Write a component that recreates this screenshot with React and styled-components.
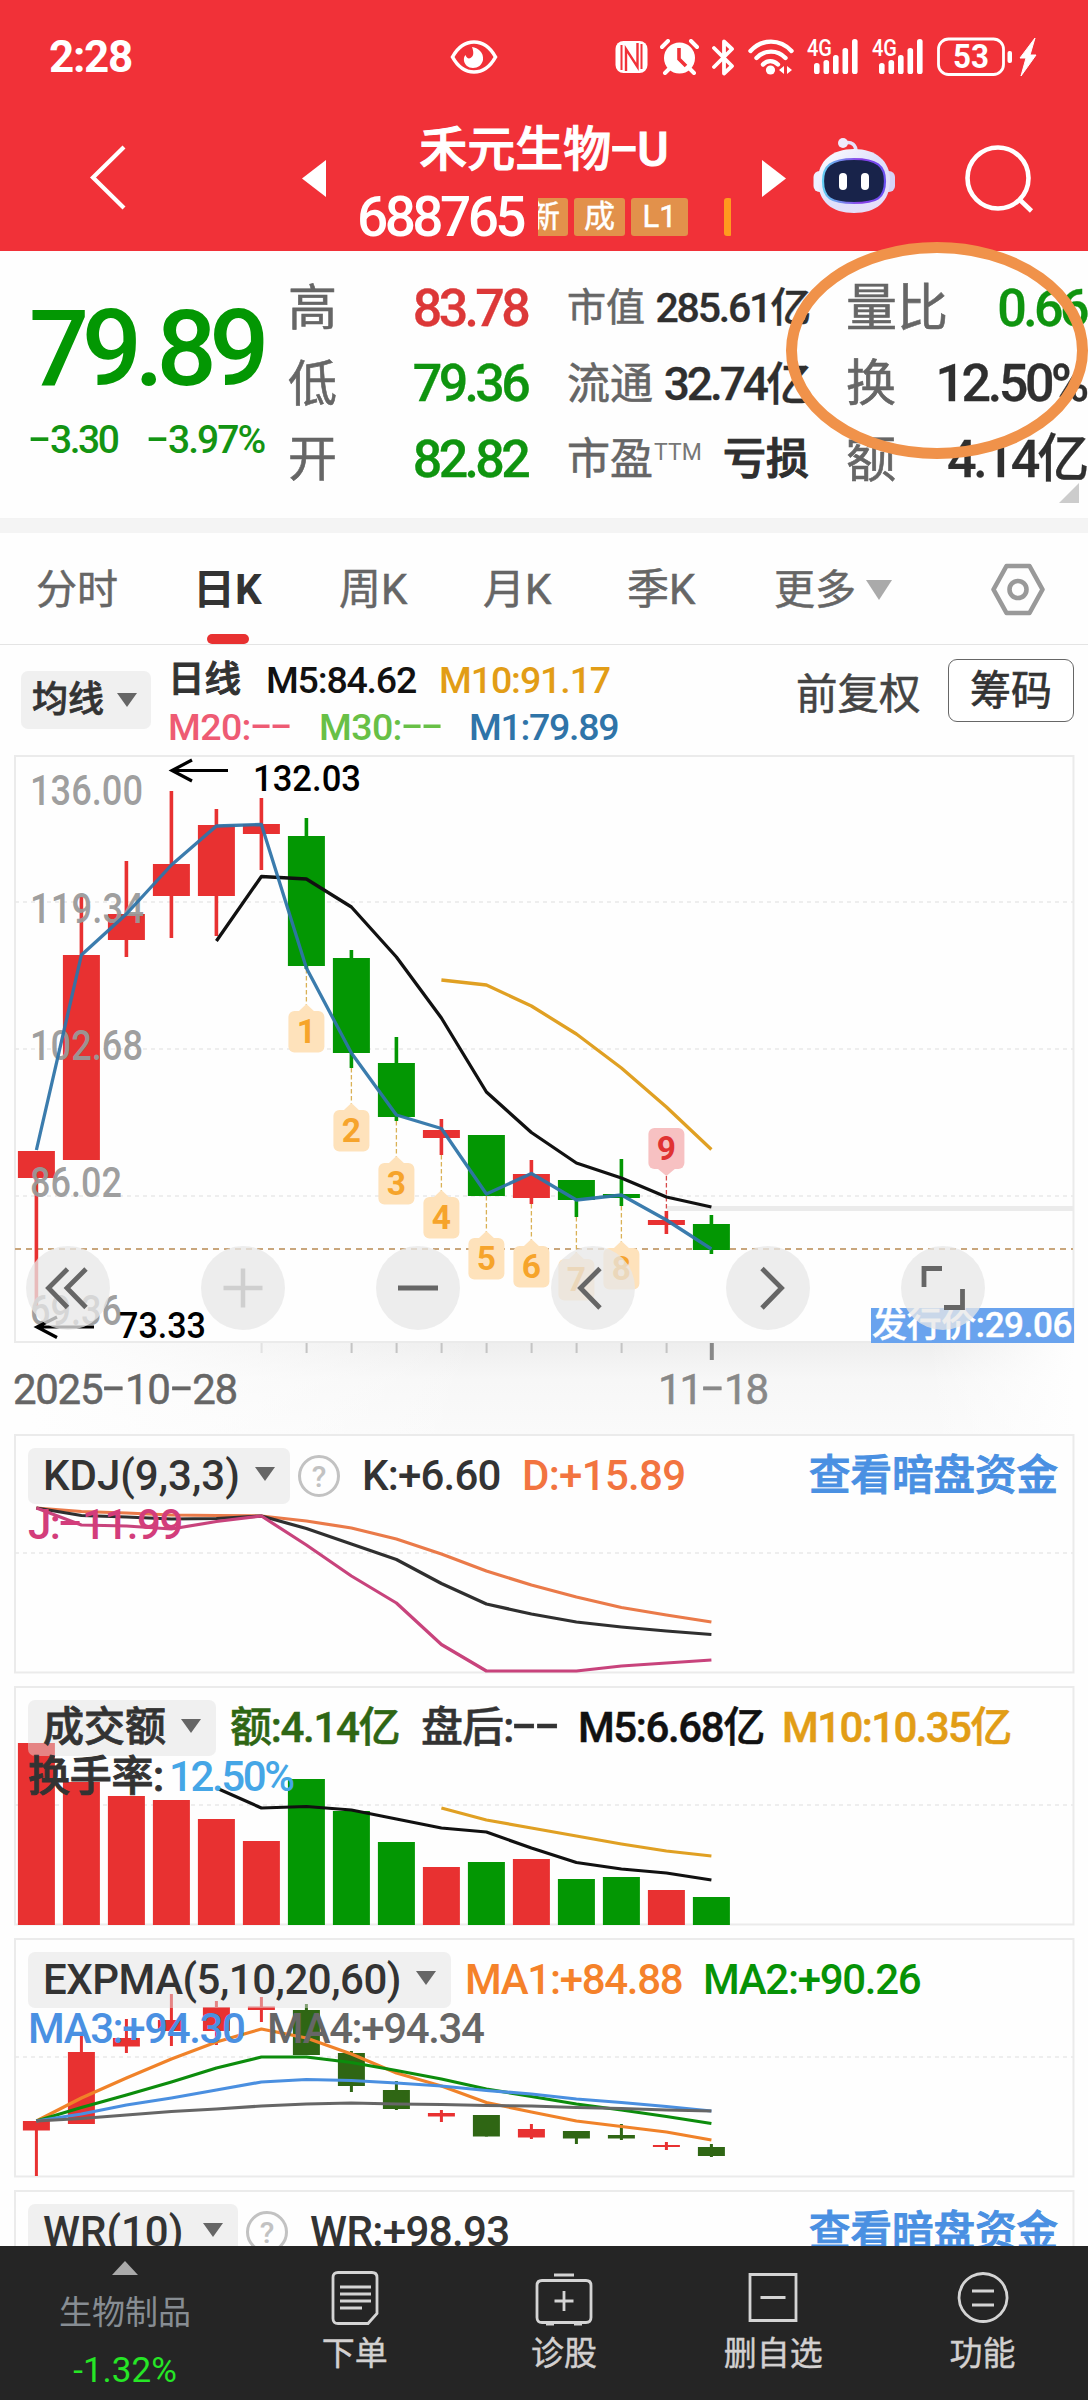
import React from 'react';
import styled, { createGlobalStyle } from 'styled-components';

const FONT = 'Roboto, "Noto Sans CJK SC", "Liberation Sans", sans-serif';
const RED = '#e83131';
const GREEN = '#039703';

const Global = createGlobalStyle`
  * { box-sizing: border-box; }
  body { margin: 0; background: #fff; font-family: ${FONT}; }
  svg { display: block; flex: none; }
  button { font-family: inherit; border: 0; padding: 0; background: none; }
`;

const Screen = styled.div`
  position: relative;
  width: 1088px;
  height: 2400px;
  overflow: hidden;
  display: flex;
  flex-direction: column;
  background: #fefefe;
`;
const Label = styled.span`
  display: block;
  flex: none;
  white-space: nowrap;
  width: ${(p) => (p.$w ? `${p.$w}px` : 'auto')};
  font-size: ${(p) => p.$size}px;
  font-weight: ${(p) => p.$weight || 500};
  letter-spacing: ${(p) => p.$ls || 0}px;
  color: ${(p) => p.$color || '#333'};
  line-height: ${(p) => p.$lh || p.$size}px;
  -webkit-text-stroke: ${(p) => p.$stroke || 0}px currentColor;
`;
const Dash = styled.span`
  display: inline-block;
  width: 0.54em;
  text-align: center;
  letter-spacing: 0;
  transform: translateY(-0.06em) scaleX(1.75);
`;

function T({ children, size, weight, ls, color, w, lh, stroke }) {
  const parts = String(children).split('-');
  return (
    <Label $size={size} $weight={weight} $ls={ls} $color={color} $w={w} $lh={lh} $stroke={stroke}>
      {parts.map((part, i) => (
        <React.Fragment key={i}>
          {i > 0 && <Dash>-</Dash>}
          {part}
        </React.Fragment>
      ))}
    </Label>
  );
}

/* ---------- header ---------- */
const Header = styled.header`
  flex: none;
  height: 251px;
  background: #f13138;
  color: #fff;
`;
const StatusBar = styled.div`
  height: 114px;
  padding: 0 50px 0 49px;
  display: flex;
  align-items: center;
`;
const StatusIcons = styled.div`
  margin-left: auto;
  display: flex;
  align-items: center;
`;
const StatusSlot = styled.div`
  margin-left: ${(p) => p.$gap || 0}px;
`;
const Eye = styled.div`
  margin-left: 311px;
`;
const TitleBar = styled.div`
  height: 137px;
  display: flex;
  align-items: flex-start;
`;
const IconSlot = styled.div`
  margin: ${(p) => p.$m};
`;
const TitleBlock = styled.div`
  width: 436px;
  display: flex;
  flex-direction: column;
  align-items: center;
`;
const CodeRow = styled.div`
  width: 436px;
  margin-top: 11px;
  padding-left: 31px;
  display: flex;
  align-items: center;
  height: 40px;
`;
const Badges = styled.div`
  flex: none;
  width: 193px;
  margin-left: 13px;
  height: 38px;
  overflow: hidden;
  display: flex;
  gap: 6px;
`;
const Badge = styled.span`
  flex: none;
  width: ${(p) => p.$w}px;
  margin-left: ${(p) => p.$ml || 0}px;
  height: 38px;
  line-height: 38px;
  border-radius: 3px;
  background: ${(p) => p.$bg || '#e2914b'};
  text-align: center;
  font-size: 31px;
  -webkit-text-stroke: 0.500px #fff;
  white-space: nowrap;
`;
const SignalIcon = styled.svg`
  overflow: visible;
`;

const Signal = () => (
  <SignalIcon width="52" height="38" viewBox="0 0 52 38">
    <text x="0" y="18" fill="#fff" fontSize="23" fontWeight="500" textLength="25" lengthAdjust="spacingAndGlyphs">4G</text>
    {[[7, 25], [16.500, 22], [26, 17], [35.500, 10], [45, 1]].map(([x, y]) => (
      <rect key={x} x={x} y={y} width="5.600" height={36 - y} rx="2.600" fill="#fff" />
    ))}
  </SignalIcon>
);

function StatusRow() {
  return (
    <StatusBar>
      <T size={44} weight={700} ls={-1.300} color="#fff" w={90}>2:28</T>
      <Eye>
        <svg width="48" height="36" viewBox="0 0 48 36" fill="none" stroke="#fff">
          <path d="M2.500 18C8 8 15 3 24 3s16 5 21.500 15C40 28 33 33 24 33S8 28 2.500 18z" strokeWidth="3.600" />
          <path d="M22 8c6 1 12 5 11 13-1 5-5 8-10 8-5 0-8-3-9-7-.5-3 .5-5 1.500-6 1 3 3 4 5 3 4-2 3-7 1.500-11z" fill="#fff" stroke="none" />
        </svg>
      </Eye>
      <StatusIcons>
        <svg width="33" height="34" viewBox="0 0 33 34">
          <rect x="0.500" y="1" width="32" height="32" rx="8" fill="#fff" />
          <path d="M6.500 5v25M26.500 4v25" stroke="#f13138" strokeWidth="2" />
          <path d="M11 31V9l11.500 18V3" fill="none" stroke="#f13138" strokeWidth="2.400" />
        </svg>
        <StatusSlot $gap={12}>
          <svg width="39" height="36" viewBox="0 0 39 36">
            <circle cx="19.500" cy="19" r="15.500" fill="#fff" />
            <path d="M2 8l6-6M37 8l-6-6M5 34l5-5M34 34l-5-5" stroke="#fff" strokeWidth="4" strokeLinecap="round" />
            <path d="M19 9v11l7 7" fill="none" stroke="#f13138" strokeWidth="3.600" />
          </svg>
        </StatusSlot>
        <StatusSlot $gap={13}>
          <svg width="23" height="37" viewBox="0 0 23 37" fill="none" stroke="#fff" strokeWidth="3.800" strokeLinejoin="round" strokeLinecap="round">
            <path d="M2 9l18 18-8 7.500V2.500L20 10 2 28" />
          </svg>
        </StatusSlot>
        <StatusSlot $gap={13}>
          <svg width="46" height="36" viewBox="0 0 46 36" fill="none" stroke="#fff" strokeWidth="4.400" strokeLinecap="round">
            <path d="M2.500 12C14-.5 32-.5 43.500 12M8.500 19c8-8.500 21-8.500 29 0M15 25.500c4-4.500 10.500-4.500 15 0" />
            <circle cx="22.500" cy="31" r="4.600" fill="#fff" stroke="none" />
            <path d="M36 27v8l-5-4zM39 27v8l5-4z" fill="#fff" stroke="none" />
          </svg>
        </StatusSlot>
        <StatusSlot $gap={13}><Signal /></StatusSlot>
        <StatusSlot $gap={13}><Signal /></StatusSlot>
        <StatusSlot $gap={13}>
          <svg width="101" height="40" viewBox="0 0 101 40">
            <rect x="1.500" y="2" width="65" height="35.500" rx="10" fill="none" stroke="#fff" strokeWidth="2.800" />
            <text x="16" y="31" fill="#fff" fontSize="33" fontWeight="700" textLength="36" lengthAdjust="spacingAndGlyphs">53</text>
            <rect x="70.500" y="14" width="4.500" height="12" rx="2" fill="#fff" />
            <path d="M98 1L83 21h6l-5 18 15-21h-6l5-17z" fill="#fff" stroke="#fff" strokeWidth="1" />
          </svg>
        </StatusSlot>
      </StatusIcons>
    </StatusBar>
  );
}

function Top() {
  return (
    <Header>
      <StatusRow />
      <TitleBar>
        <IconSlot $m="29px 0 0 88px">
          <svg width="42" height="68" viewBox="0 0 42 68" fill="none" stroke="#fff" strokeWidth="4.200">
            <path d="M36 4L5 34.500 36 65" />
          </svg>
        </IconSlot>
        <IconSlot $m="46px 0 0 172px">
          <svg width="24" height="37" viewBox="0 0 24 37"><path d="M24 0v37L0 18.500z" fill="#fff" /></svg>
        </IconSlot>
        <TitleBlock>
          <T size={48} weight={500} color="#fff" lh={72} stroke={1}>禾元生物-U</T>
          <CodeRow>
            <T size={55} weight={500} ls={-3.600} color="#fff" w={168}>688765</T>
            <Badges>
              <Badge $w={47} $ml={-17}>新</Badge>
              <Badge $w={51}>成</Badge>
              <Badge $w={57}>L1</Badge>
              <Badge $w={8} $ml={30} $bg="#ff9a1e" />
            </Badges>
          </CodeRow>
        </TitleBlock>
        <IconSlot $m="46px 0 0 0">
          <svg width="24" height="37" viewBox="0 0 24 37"><path d="M0 0v37l24-18.500z" fill="#fff" /></svg>
        </IconSlot>
        <IconSlot $m="22px 0 0 27px">
          <svg width="83" height="80" viewBox="0 0 83 80">
            <defs>
              <linearGradient id="shell" x1="0" y1="0" x2="1" y2="1">
                <stop offset="0" stopColor="#fff" />
                <stop offset="0.500" stopColor="#dfe0fb" />
                <stop offset="1" stopColor="#e9dcf8" />
              </linearGradient>
              <linearGradient id="rim" x1="0" y1="0" x2="1" y2="0">
                <stop offset="0" stopColor="#62cdf2" />
                <stop offset="0.600" stopColor="#8a3ee8" />
                <stop offset="1" stopColor="#6a50f0" />
              </linearGradient>
            </defs>
            <path d="M31 7c8-2 12 2 12 9" fill="none" stroke="#e6e0fa" strokeWidth="3.600" />
            <circle cx="30" cy="7" r="5" fill="#efeafd" />
            <rect x="0.500" y="35" width="14" height="21" rx="6" fill="#eef0ff" />
            <rect x="68" y="35" width="14" height="21" rx="6" fill="#d6d2f6" />
            <path d="M41 13c22 0 36 12 36 31 0 22-14 33-36 33S5 66 5 44c0-19 14-31 36-31z" fill="url(#shell)" />
            <path d="M41 23c23 0 31 7 31 22 0 17-8 22-31 22s-31-5-31-22c0-15 8-22 31-22z" fill="#18234a" stroke="url(#rim)" strokeWidth="2.200" />
            <rect x="26" y="37" width="8" height="17" rx="4" fill="#fff" />
            <rect x="48" y="37" width="8" height="17" rx="4" fill="#fff" />
          </svg>
        </IconSlot>
        <IconSlot $m="29px 0 0 68px">
          <svg width="72" height="72" viewBox="0 0 72 72" fill="none" stroke="#fff" strokeWidth="4.600">
            <circle cx="34" cy="35" r="30.500" />
            <path d="M56 57l11.500 11" />
          </svg>
        </IconSlot>
      </TitleBar>
    </Header>
  );
}

/* ---------- quote ---------- */
const Quote = styled.section`
  flex: none;
  position: relative;
  height: 268px;
  display: flex;
  border-bottom: 1px solid #f3f3f3;
`;
const PriceBlock = styled.div`
  width: 288px;
  padding: 48px 0 0 29px;
`;
const ChangeRow = styled.div`
  display: flex;
  margin-top: 21px;
`;
const QuoteColumn = styled.div`
  width: ${(p) => p.$w}px;
  margin-right: ${(p) => p.$mr}px;
  padding-top: 20px;
`;
const QuoteRow = styled.div`
  height: 75.500px;
  display: flex;
  align-items: center;
  justify-content: space-between;
`;
const LabelGroup = styled.div`
  display: flex;
  align-items: center;
`;
const Tm = styled.span`
  font-size: 23px;
  line-height: 23px;
  margin: -14px 0 0 1px;
  color: #777;
  letter-spacing: 0;
`;
const Corner = styled.i`
  position: absolute;
  right: 9px;
  bottom: 15px;
  border-style: solid;
  border-width: 0 0 20px 20px;
  border-color: transparent transparent #ccc transparent;
`;
const Band = styled.div`
  flex: none;
  height: 14px;
  background: #f4f4f4;
`;

const QUOTE_COLUMNS = [
  { w: 239, mr: 40, rows: [
    { k: '高', ks: 49, v: '83.78', vs: 52, ls: -3.700, c: '#dc3838' },
    { k: '低', ks: 49, v: '79.36', vs: 52, ls: -3.700, c: '#0f940f' },
    { k: '开', ks: 49, v: '82.82', vs: 52, ls: -3.700, c: '#0f940f' },
  ] },
  { w: 242, mr: 37, rows: [
    { k: '市值', ks: 39, v: '285.61亿', vs: 41, ls: -2.200 },
    { k: '流通', ks: 43, v: '32.74亿', vs: 46, ls: -3 },
    { k: '市盈', ks: 43, tm: 'TTM', v: '亏损', vs: 43, stroke: 1.100 },
  ] },
  { w: 240, mr: 0, rows: [
    { k: '量比', ks: 51, v: '0.66', vs: 52, ls: -3.600, c: '#0f940f' },
    { k: '换', ks: 50, v: '12.50%', vs: 52, ls: -3.400 },
    { k: '额', ks: 50, v: '4.14亿', vs: 52, ls: -3.200 },
  ] },
];

function QuotePanel() {
  return (
    <Quote>
      <PriceBlock>
        <T size={106} weight={500} ls={-7.500} color={GREEN} lh={100}>79.89</T>
        <ChangeRow>
          <T size={39} ls={-2.500} color="#139413" w={118} lh={40}>-3.30</T>
          <T size={39} ls={-2} color="#139413" lh={40}>-3.97%</T>
        </ChangeRow>
      </PriceBlock>
      {QUOTE_COLUMNS.map((col, i) => (
        <QuoteColumn key={i} $w={col.w} $mr={col.mr}>
          {col.rows.map((r) => (
            <QuoteRow key={r.k}>
              <LabelGroup>
                <T size={r.ks} weight={400} color="#666" stroke={0.600}>{r.k}</T>
                {r.tm && <Tm>{r.tm}</Tm>}
              </LabelGroup>
              <T size={r.vs} ls={r.ls} color={r.c || '#2f2f2f'} stroke={r.stroke || 0.300}>{r.v}</T>
            </QuoteRow>
          ))}
        </QuoteColumn>
      ))}
      <Corner />
    </Quote>
  );
}

const Highlight = styled.svg`
  position: absolute;
  left: 784px;
  top: 240px;
`;

/* ---------- tabs ---------- */
const Tabs = styled.nav`
  flex: none;
  height: 112px;
  padding: 0 43px 0 36px;
  display: flex;
  border-bottom: 1px solid #e4e4e4;
`;
const Tab = styled.div`
  width: ${(p) => p.$w}px;
  display: flex;
  flex-direction: column;
  align-items: flex-start;
  padding-top: 35px;
`;
const TabLine = styled.i`
  width: 42px;
  height: 10px;
  margin: 22px 0 0 14px;
  border-radius: 5px;
  background: ${RED};
`;
const TabLabel = styled.div`
  display: flex;
  align-items: center;
`;
const Down = styled.i`
  width: 0;
  height: 0;
  margin: ${(p) => p.$m || '0'};
  border-left: ${(p) => p.$s}px solid transparent;
  border-right: ${(p) => p.$s}px solid transparent;
  border-top: ${(p) => p.$h}px solid ${(p) => p.$c || '#666'};
`;
const Gear = styled.div`
  margin: 30px 0 0 auto;
`;

const PERIODS = [['周K', 144], ['月K', 144], ['季K', 147]];

function TabBar() {
  return (
    <Tabs>
      <Tab $w={157}><T size={41} weight={400} color="#666" lh={44} stroke={0.500}>分时</T></Tab>
      <Tab $w={146}><T size={42} weight={700} lh={44}>日K</T><TabLine /></Tab>
      {PERIODS.map(([name, w]) => (
        <Tab key={name} $w={w}><T size={42} weight={400} color="#666" lh={44} stroke={0.500}>{name}</T></Tab>
      ))}
      <Tab $w={140}>
        <TabLabel>
          <T size={41} weight={400} color="#666" lh={44} stroke={0.500}>更多</T>
          <Down $s={13} $h={20} $c="#aaa" $m="0 0 0 10px" />
        </TabLabel>
      </Tab>
      <Gear>
        <svg width="54" height="53" viewBox="0 0 54 53" fill="none" stroke="#999" strokeWidth="4.600" strokeLinejoin="round">
          <path d="M15.500 3h23L51.500 26.500 38.500 50h-23L2.500 26.500z" />
          <circle cx="27" cy="26.500" r="8.500" />
        </svg>
      </Gear>
    </Tabs>
  );
}

/* ---------- moving averages legend ---------- */
const Legend = styled.div`
  flex: none;
  height: 110px;
  padding: 0 14px 0 21px;
  display: flex;
`;
const Picker = styled.button`
  flex: none;
  display: flex;
  align-items: center;
  width: ${(p) => p.$w}px;
  height: ${(p) => p.$h || 56}px;
  margin: ${(p) => p.$m || '0'};
  padding-left: ${(p) => p.$pl || 15}px;
  border-radius: 7px;
  background: rgba(225, 225, 225, 0.470);
`;
const LegendLines = styled.div`
  flex: none;
  width: 645px;
  padding: 12px 0 0 17px;
`;
const Line = styled.div`
  display: flex;
  align-items: center;
  height: ${(p) => p.$h}px;
  padding-left: ${(p) => p.$pl || 0}px;
`;
const Adjust = styled.div`
  flex: none;
  padding-top: 28px;
  width: 152px;
`;
const Chips = styled.button`
  flex: none;
  width: 126px;
  height: 63px;
  margin-top: 14px;
  border: 1.500px solid #666;
  border-radius: 9px;
  display: flex;
  align-items: center;
  justify-content: center;
  background: #fff;
`;

function AverageLegend() {
  return (
    <Legend>
      <Picker $w={130} $h={58} $pl={11} $m="26px 0 0 0">
        <T size={36} stroke={0.700}>均线</T>
        <Down $s={10} $h={14} $m="0 0 0 13px" />
      </Picker>
      <LegendLines>
        <Line $h={47}>
          <T size={36.500} w={98} stroke={1}>日线</T>
          <T size={37.500} ls={-1.200} color="#111" w={173}>M5:84.62</T>
          <T size={37.500} ls={-1.100} color="#e29d16">M10:91.17</T>
        </Line>
        <Line $h={47}>
          <T size={37.500} ls={-0.600} color="#ee5b73" w={151}>M20:--</T>
          <T size={37.500} ls={-0.600} color="#68c046" w={150}>M30:--</T>
          <T size={37.500} ls={-1.300} color="#2f74a8">M1:79.89</T>
        </Line>
      </LegendLines>
      <Adjust><T size={41.500} weight={400} color="#444" lh={44} stroke={0.500}>前复权</T></Adjust>
      <Chips><T size={41} weight={400} stroke={0.700} lh={46}>筹码</T></Chips>
    </Legend>
  );
}

/* ---------- candle chart ---------- */
const X0 = 36.400;
const STEP = 45;
const cx = (i) => X0 + STEP * i;
const path = (ys, start = 0) =>
  ys.map((y, k) => `${cx(start + k)},${y}`).join(' ');

function Candles({ data, width, down, wick = 3.600 }) {
  return data.map(([up, top, bottom, high, low], i) => {
    const color = up ? RED : down;
    return (
      <g key={i} fill={color}>
        <rect x={cx(i) - wick / 2} y={high} width={wick} height={low - high} />
        <rect x={cx(i) - width / 2} y={top} width={width} height={bottom - top} />
      </g>
    );
  });
}

const DAILY = [
  [1, 1151, 1178, 1151, 1306], [1, 955, 1160, 897, 1160], [1, 914, 940, 861, 957],
  [1, 864, 896, 791, 938], [1, 825, 896, 809, 936], [1, 824, 834, 798, 870],
  [0, 836, 966, 818, 969], [0, 958, 1053, 950, 1068], [0, 1063, 1117, 1037, 1121],
  [1, 1130, 1138, 1119, 1155], [0, 1135, 1196, 1135, 1196], [1, 1174, 1198, 1160, 1204],
  [0, 1180, 1200, 1180, 1217], [0, 1194, 1198, 1159, 1206], [1, 1220, 1225, 1211, 1234],
  [0, 1224, 1250, 1215, 1254],
];
const M1 = [1150, 955, 914, 865, 826, 824.500, 968, 1053, 1115, 1128.500, 1194, 1173.500, 1200, 1195, 1220, 1249];
const M5 = [941, 876.500, 879, 907, 957, 1018, 1092, 1132.500, 1163, 1178, 1197, 1207];
const M10 = [980, 985, 1006, 1034, 1068, 1107, 1149.500];
const SCALE = [
  ['136.00', 805, 113], ['119.34', 923, 114], ['102.68', 1060, 113], ['86.02', 1197, 92], ['69.36', 1324.500, 92],
];

const ChartBox = styled.section`
  flex: none;
  position: relative;
  height: 588px;
`;
const IssuePrice = styled.div`
  position: absolute;
  right: 14px;
  top: 553px;
  width: 203px;
  height: 35px;
  padding-left: 1px;
  background: #69a3ee;
`;
const Controls = styled.div`
  position: absolute;
  left: 26px;
  top: 491px;
  display: flex;
  gap: 91px;
`;
const RoundButton = styled.button`
  width: 84px;
  height: 84px;
  border-radius: 50%;
  background: rgba(231, 231, 231, 0.760);
`;
const CONTROL_ICONS = [
  ['M41.500 23L22.500 42l19 19.500M60 23L41 42l19 19.500', '#666', 4.800],
  ['M22.500 42h39M42 22.500v39', '#cfcfcf', 4.500],
  ['M22 42h40', '#666', 5],
  ['M49 22.500L29.500 42 49 62', '#666', 4.800],
  ['M36 22.500L55.500 42 36 62', '#666', 4.800],
  ['M23 41V22.500h18M61.500 43v18.500H43', '#666', 4.800],
];

function NineTurn({ n, i, low }) {
  const x = cx(i);
  const top = low + 42;
  return (
    <g>
      <line x1={x} x2={x} y1={low} y2={top - 6} stroke="#d9b155" strokeWidth="1.300" strokeDasharray="4.500 2.500" />
      <path d={`M${x - 8} ${top + 0.500}L${x} ${top - 7}l8 7.500z`} fill="#fee2bb" />
      <rect x={x - 18} y={top} width="36" height="41.500" rx="6" fill="#fee2bb" />
      <text x={x} y={top + 31.500} fill="#f6a42b" fontSize="33.500" fontWeight="700" textAnchor="middle">{n}</text>
    </g>
  );
}

function CandleChart() {
  return (
    <ChartBox>
      <svg width="1088" height="588" viewBox="0 755 1088 588">
        <rect x="15" y="756" width="1058.500" height="586" fill="none" stroke="#ebebeb" strokeWidth="2" />
        {[902, 1049, 1196].map((y) => (
          <line key={y} x1="15" x2="1073" y1={y} y2={y} stroke="#e9e9e9" strokeWidth="1.600" strokeDasharray="4 4" />
        ))}
        <line x1="15" x2="1073" y1="1249" y2="1249" stroke="#c9a67c" strokeWidth="2" strokeDasharray="6 5" />
        <rect x="667" y="1206" width="406" height="5" fill="#ebebeb" />
        <Candles data={DAILY} width={37} down={GREEN} />
        {DAILY.slice(6, 14).map((d, k) => (
          <NineTurn key={k} n={k + 1} i={k + 6} low={d[4]} />
        ))}
        <line x1={cx(14)} x2={cx(14)} y1="1176" y2="1211" stroke="#d64a4a" strokeWidth="1.300" strokeDasharray="4.500 2.500" />
        <rect x={cx(14) - 18} y="1128" width="36" height="41" rx="6" fill="#f7c1c2" />
        <path d={`M${cx(14) - 9} 1168.500h18l-9 7.500z`} fill="#f7c1c2" />
        <text x={cx(14)} y="1159.500" fill="#e03232" fontSize="33.500" fontWeight="700" textAnchor="middle">9</text>
        {SCALE.map(([t, y, w]) => (
          <text key={t} x="30" y={y} fill="#999" fillOpacity="0.940" fontSize="42" fontWeight="500" textLength={w} lengthAdjust="spacingAndGlyphs">{t}</text>
        ))}
        <g fill="none" strokeWidth="3.300" strokeLinejoin="round">
          <polyline points={path(M10, 9)} stroke="#e0a023" />
          <polyline points={path(M5, 4)} stroke="#111" />
          <polyline points={path(M1)} stroke="#2f74a8" strokeOpacity="0.940" />
        </g>
        <g fill="none" stroke="#000" strokeWidth="3.200">
          <path d="M228 770.500H172M192 760l-20 10.500 20 10.500" />
          <path d="M94 1327H38M57 1317l-20 10 20 10.500" />
        </g>
        <g fill="#000" fontSize="36.500" fontWeight="500">
          <text x="253" y="791" textLength="108" lengthAdjust="spacingAndGlyphs">132.03</text>
          <text x="119" y="1338" textLength="87" lengthAdjust="spacingAndGlyphs">73.33</text>
        </g>
      </svg>
      <IssuePrice><T size={35} color="#fff" ls={-0.400} lh={35} stroke={0.400}>发行价:29.06</T></IssuePrice>
      <Controls>
        {CONTROL_ICONS.map(([d, stroke, sw]) => (
          <RoundButton key={d}>
            <svg width="84" height="84" viewBox="0 0 84 84" fill="none" stroke={stroke} strokeWidth={sw}><path d={d} /></svg>
          </RoundButton>
        ))}
      </Controls>
    </ChartBox>
  );
}

const Axis = styled.div`
  flex: none;
  height: 91px;
  background:
    linear-gradient(to right, #fefefe 30px, rgba(254, 254, 254, 0) 480px),
    linear-gradient(to left, #fefefe 14px, rgba(254, 254, 254, 0) 160px),
    linear-gradient(to bottom, #eeeeee, #f7f7f7 40%, #fafafa);
`;
const Dates = styled.div`
  display: flex;
  margin-top: 9px;
  padding-left: 13px;
`;

function DateAxis() {
  return (
    <Axis>
      <svg width="1088" height="18" viewBox="0 0 1088 18">
        {Array.from({ length: 10 }, (_, k) => (
          <rect key={k} x={cx(k + 5) - 0.800} y="0" width="2" height="10" fill={k === 0 ? '#e2e2e2' : '#c4c4c4'} />
        ))}
        <rect x={cx(15) - 1.600} y="0" width="4" height="17" fill="#888" />
      </svg>
      <Dates>
        <T size={42} weight={400} ls={-1.300} color="#666" lh={40} w={645} stroke={0.500}>2025-10-28</T>
        <T size={42} weight={400} ls={-2} color="#888" lh={40} stroke={0.500}>11-18</T>
      </Dates>
    </Axis>
  );
}

/* ---------- indicator panels ---------- */
const Panel = styled.section`
  flex: none;
  position: relative;
  height: 252px;
  padding: 13px 0 0 28px;
`;
const Plot = styled.svg`
  position: absolute;
  left: 0;
  top: 0;
`;
const Readout = styled.div`
  position: relative;
  height: ${(p) => p.$h}px;
  display: flex;
  align-items: center;
  padding-top: 1px;
`;
const Help = styled.i`
  flex: none;
  width: 42px;
  height: 42px;
  margin: 0 22px 0 8px;
  border: 3px solid #c2c2c2;
  border-radius: 50%;
  color: #c2c2c2;
  font: normal 500 30px/37px ${FONT};
  text-align: center;
`;
const Link = styled.a`
  margin: 0 30px 0 auto;
`;

function Frame({ y, children }) {
  return (
    <Plot width="1088" height="240" viewBox={`0 ${y} 1088 240`}>
      <rect x="15" y={y + 1} width="1058.500" height="237.500" fill="none" stroke="#ebebeb" strokeWidth="2" />
      <line x1="15" x2="1073" y1={y + 119} y2={y + 119} stroke="#e9e9e9" strokeWidth="1.600" strokeDasharray="4 4" />
      {children}
    </Plot>
  );
}
function Curve({ ys, start = 0, c, w = 3.200 }) {
  return <polyline points={path(ys, start)} fill="none" stroke={c} strokeWidth={w} strokeLinejoin="round" />;
}
function Select({ w, text, size = 42, ls, stroke }) {
  return (
    <Picker $w={w}>
      <T size={size} ls={ls} stroke={stroke}>{text}</T>
      <Down $s={10.500} $h={14} $m="-3px 15px 0 auto" />
    </Picker>
  );
}
const DarkFunds = () => <Link><T size={41.500} color="#4a90e2" stroke={1}>查看暗盘资金</T></Link>;

const KD_D = [1508, 1511.500, 1513, 1515, 1515.500, 1516, 1521, 1528, 1539, 1554, 1571, 1585, 1597, 1607.500, 1615, 1622];
const KD_K = [1508, 1515.500, 1517, 1519, 1518.500, 1516, 1528.500, 1544, 1559.500, 1583.500, 1604, 1614, 1622, 1627, 1631, 1634.500];
const KD_J = [1508, 1525, 1526, 1529, 1521.500, 1516, 1545, 1576, 1603, 1644.500, 1671, 1671, 1671, 1666, 1663, 1660];

function Kdj() {
  return (
    <Panel>
      <Frame y={1434}>
        <Curve ys={KD_D} c="#ea7a49" />
        <Curve ys={KD_K} c="#2f2f2f" />
        <Curve ys={KD_J} c="#c8437c" />
      </Frame>
      <Readout $h={56}>
        <Select w={262} text="KDJ(9,3,3)" />
        <Help>?</Help>
        <T size={42} ls={-0.800} w={160}>K:+6.60</T>
        <T size={42} ls={-0.700} color="#f27440">D:+15.89</T>
        <DarkFunds />
      </Readout>
      <Readout $h={42}><T size={42} ls={-1.500} color="#d33d7b">J:-11.99</T></Readout>
    </Panel>
  );
}

const VOLUME = [
  [1, 1743], [1, 1782], [1, 1796], [1, 1800], [1, 1819], [1, 1841], [0, 1779], [0, 1811],
  [0, 1842], [1, 1867], [0, 1862], [1, 1859], [0, 1879], [0, 1877], [1, 1890], [0, 1897],
];

function Turnover() {
  return (
    <Panel>
      <Frame y={1686}>
        {VOLUME.map(([up, y], i) => (
          <rect key={i} x={cx(i) - 18.500} y={y} width="37" height={1925 - y} fill={up ? RED : GREEN} />
        ))}
        <Curve start={4} c="#111" ys={[1788, 1808, 1806.500, 1810, 1819, 1828, 1832, 1848, 1862.500, 1869, 1873, 1880]} />
        <Curve start={9} c="#e0a023" ys={[1808, 1820, 1828, 1836, 1844, 1851, 1856]} />
      </Frame>
      <Readout $h={56}>
        <Select w={188} text="成交额" size={41} stroke={0.800} />
        <Line $h={56} $pl={14}>
          <T size={42} ls={-1.300} color="#2f6614" w={191} stroke={0.500}>额:4.14亿</T>
          <T size={42} ls={-0.900} w={157} stroke={0.500}>盘后:--</T>
          <T size={42} ls={-1.400} color="#111" w={204} stroke={0.500}>M5:6.68亿</T>
          <T size={42} ls={-1.600} color="#e29d16" stroke={0.500}>M10:10.35亿</T>
        </Line>
      </Readout>
      <Readout $h={42}>
        <T size={42} w={141} ls={-0.300} stroke={0.900}>换手率:</T>
        <T size={42} ls={-2.400} color="#45a6e6">12.50%</T>
      </Readout>
    </Panel>
  );
}

const EXP = [
  [1, 2121, 2130.500, 2121, 2176], [1, 2052, 2124, 2034, 2124], [1, 2038, 2046.500, 2019, 2053],
  [1, 2020, 2031, 1994, 2046], [1, 2007, 2031, 2001, 2045], [1, 2006.500, 2010, 1997, 2022],
  [0, 2010, 2055, 2004, 2055], [0, 2053, 2086, 2051, 2092], [0, 2090, 2109, 2081, 2110],
  [1, 2113, 2116.500, 2110, 2122], [0, 2115, 2136.500, 2115, 2136.500], [1, 2129, 2137.500, 2124, 2139],
  [0, 2131, 2138.500, 2131, 2144], [0, 2135, 2138.500, 2124, 2140], [1, 2145, 2147, 2142, 2150],
  [0, 2147, 2156, 2144, 2157],
];

function Expma() {
  return (
    <Panel>
      <Frame y={1938}>
        <Candles data={EXP} width={27} wick={3} down="#2f6614" />
        <Curve c="#f08229" ys={[2121, 2098, 2078, 2059, 2042, 2029, 2038, 2054, 2073, 2086, 2102.500, 2112, 2121, 2126.500, 2132, 2140]} />
        <Curve c="#0c8c0c" ys={[2121, 2107.500, 2095, 2082, 2068, 2057, 2057, 2062.500, 2070.500, 2079, 2089, 2096.500, 2104, 2110, 2116.500, 2123.500]} />
        <Curve c="#4a8fe0" ys={[2121, 2114, 2105, 2098, 2090, 2082, 2079.500, 2080.500, 2083, 2086, 2090.500, 2094, 2099, 2102.500, 2106.500, 2111]} />
        <Curve c="#666" ys={[2121, 2118.500, 2115, 2111.500, 2109, 2106, 2104, 2103, 2104, 2104.500, 2105.500, 2106, 2107.500, 2108.500, 2110, 2111]} />
      </Frame>
      <Readout $h={56}>
        <Select w={423} text="EXPMA(5,10,20,60)" ls={-0.500} />
        <Line $h={56} $pl={14}>
          <T size={42} ls={-1.300} color="#f5822a" w={238}>MA1:+84.88</T>
          <T size={42} ls={-1.300} color="#069206">MA2:+90.26</T>
        </Line>
      </Readout>
      <Readout $h={42}>
        <T size={42} ls={-1.400} color="#4a90e2" w={239}>MA3:+94.30</T>
        <T size={42} ls={-1.400} color="#666">MA4:+94.34</T>
      </Readout>
    </Panel>
  );
}

function Wr() {
  return (
    <Panel>
      <Frame y={2190} />
      <Readout $h={56}>
        <Select w={210} text="WR(10)" />
        <Help>?</Help>
        <T size={42} ls={-0.600}>WR:+98.93</T>
        <DarkFunds />
      </Readout>
    </Panel>
  );
}

const Content = styled.main`
  flex: 1;
  min-height: 0;
  overflow: hidden;
  display: flex;
  flex-direction: column;
`;

/* ---------- bottom bar ---------- */
const BottomBar = styled.footer`
  flex: none;
  height: 154px;
  display: flex;
  background: #252525;
`;
const Sector = styled.div`
  width: 250px;
  padding-top: 15px;
  display: flex;
  flex-direction: column;
  align-items: center;
`;
const Up = styled.i`
  border: 13px solid transparent;
  border-top: 0;
  border-bottom: 14px solid #aaa;
  margin-bottom: 18px;
`;
const SectorChange = styled.span`
  margin-top: 18px;
  font-size: 35px;
  line-height: 40px;
  color: #26e626;
`;
const Action = styled.div`
  width: 209.300px;
  padding-top: 24px;
  display: flex;
  flex-direction: column;
  align-items: center;
  gap: 10px;
`;
const ACTIONS = [
  ['下单', 'M7 2.500h34q5 0 5 5v36l-9 10H7q-5 0-5-5v-41q0-5 5-5zM9 17h31M9 24h31M9 31h31M9 38h22', 48],
  ['诊股', 'M19 5h20M7 10.500h44q5 0 5 5v32q0 5-5 5H7q-5 0-5-5v-32q0-5 5-5zM29 21v20M19.500 31h19M11 54h8M39 54h8', 58],
  ['删自选', 'M2 4.500h46v46H2zM12.500 27.500h25', 50],
  ['功能', 'M27 3.500a24 24 0 1 0 .1 0zM16 21h22M16 35h22', 54],
];

function Bottom() {
  return (
    <BottomBar>
      <Sector>
        <Up />
        <T size={33} weight={400} color="#878d93" lh={40}>生物制品</T>
        <SectorChange>-1.32%</SectorChange>
      </Sector>
      {ACTIONS.map(([name, d, w]) => (
        <Action key={name}>
          <svg width={w} height="56" viewBox={`0 0 ${w} 56`} fill="none" stroke="#d4d4d4" strokeWidth="2.800"><path d={d} /></svg>
          <T size={33} weight={400} color="#d2d0d0" lh={36} stroke={0.400}>{name}</T>
        </Action>
      ))}
    </BottomBar>
  );
}

export default function App() {
  return (
    <Screen>
      <Global />
      <Content>
        <Top />
        <QuotePanel />
        <Band />
        <TabBar />
        <AverageLegend />
        <CandleChart />
        <DateAxis />
        <Kdj />
        <Turnover />
        <Expma />
        <Wr />
      </Content>
      <Bottom />
      <Highlight width="306" height="222" viewBox="784 240 306 222">
        <ellipse cx="937" cy="350.500" rx="145.500" ry="103" fill="none" stroke="#f0924a" strokeWidth="11" />
      </Highlight>
    </Screen>
  );
}
